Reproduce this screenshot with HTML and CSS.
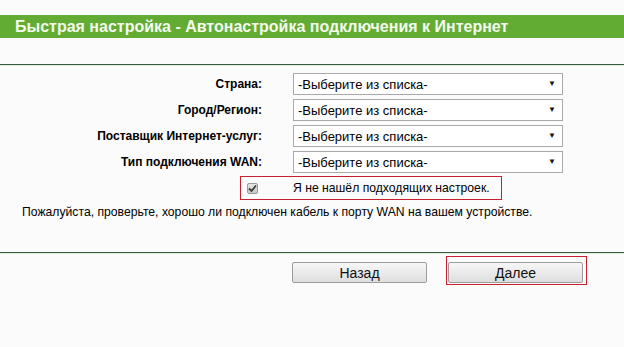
FILE: index.html
```html
<!DOCTYPE html>
<html lang="ru">

<head>
    <meta charset="UTF-8">
    <title>Быстрая настройка</title>
    <link rel="stylesheet" href="styles.css">
</head>

<body>

    <div class="title">Быстрая настройка - Автонастройка подключения к Интернет</div>
    <div class="rule top-rule"></div>

    <div class="form">
        <label class="label">Страна:</label>
        <div class="select">
            <select>
                <option>-Выберите из списка-</option>
            </select>
            <span class="arrow">▼</span>
        </div>

        <label class="label">Город/Регион:</label>
        <div class="select">
            <select>
                <option>-Выберите из списка-</option>
            </select>
            <span class="arrow">▼</span>
        </div>

        <label class="label">Поставщик Интернет-услуг:</label>
        <div class="select">
            <select>
                <option>-Выберите из списка-</option>
            </select>
            <span class="arrow">▼</span>
        </div>

        <label class="label">Тип подключения WAN:</label>
        <div class="select">
            <select>
                <option>-Выберите из списка-</option>
            </select>
            <span class="arrow">▼</span>
        </div>
    </div>

    <div class="check-row">
        <span class="checkbox">
            <svg width="9" height="9" viewBox="0 0 9 9">
                <path d="M1 4.5 L3.5 7 L8 1.5" fill="none" stroke="#3c3c3c" stroke-width="1.8" />
            </svg>
        </span>
        <span class="check-text">Я не нашёл подходящих настроек.</span>
    </div>

    <p class="note">Пожалуйста, проверьте, хорошо ли подключен кабель к порту WAN на вашем устройстве.</p>

    <div class="rule bottom-rule"></div>

    <div class="actions">
        <button class="btn back">Назад</button>
        <div class="focus-box">
            <button class="btn">Далее</button>
        </div>
    </div>

</body>

</html>
```

FILE: styles.css
```css
body {
    margin: 0;
    background: #fbfbfb;
    font-family: "Liberation Sans", Arial, sans-serif;
    font-size: 12px;
    color: #000;
}

.title {
    margin-top: 15px;
    height: 23px;
    line-height: 23px;
    padding-left: 15px;
    background: #62ac33;
    color: #f4fbef;
    font-size: 16px;
    font-weight: bold;
}

.rule {
    height: 1px;
    background: #3c5e3e;
    border-bottom: 1px solid #d8efdc;
}

.top-rule {
    margin-top: 26px;
}

.form {
    display: grid;
    grid-template-columns: 262px 270px;
    column-gap: 31px;
    row-gap: 4px;
    align-items: center;
    margin-top: 7px;
}

.label {
    text-align: right;
    font-weight: bold;
}

.select {
    position: relative;
    height: 22px;
}

.select select {
    appearance: none;
    width: 100%;
    height: 22px;
    margin: 0;
    padding: 0 4px;
    border: 1px solid #a9a9a9;
    border-radius: 0;
    background: #fff;
    font-family: inherit;
    font-size: 13px;
    color: #000;
}

.arrow {
    position: absolute;
    right: 7px;
    top: 6px;
    font-size: 8px;
    color: #111;
}

.check-row {
    display: flex;
    align-items: center;
    width: 260px;
    height: 22px;
    margin: 3px 0 0 240px;
    border: 1px solid #c8202f;
}

.checkbox {
    display: flex;
    align-items: center;
    justify-content: center;
    width: 9px;
    height: 9px;
    margin-left: 6px;
    border: 1px solid #9a9a9a;
    border-radius: 2px;
    background: linear-gradient(#e6e6e6, #c9c9c9);
}

.check-text {
    margin-left: 35px;
    font-size: 12.2px;
}

.note {
    margin: 5px 0 0 22px;
    font-size: 12.2px;
}

.bottom-rule {
    margin-top: 33px;
}

.actions {
    display: flex;
    align-items: flex-start;
    margin-top: 2px;
    padding-left: 292px;
}

.btn {
    width: 135px;
    height: 21px;
    margin: 0;
    border: 1px solid #9c9c9c;
    border-radius: 2px;
    background: linear-gradient(#f7f7f7, #dedede);
    font-family: inherit;
    font-size: 14px;
    color: #111;
}

.back {
    margin-top: 6px;
}

.focus-box {
    margin-left: 19px;
    padding: 5px 3px 1px 1px;
    border: 1px solid #c8202f;
}
```
